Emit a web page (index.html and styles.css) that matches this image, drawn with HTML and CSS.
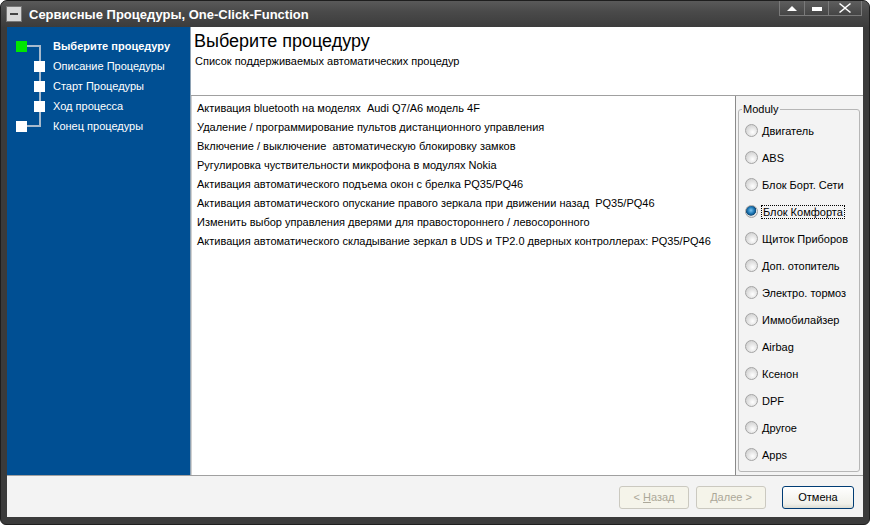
FILE: index.html
```html
<!DOCTYPE html>
<html lang="ru">
<head>
  <meta charset="UTF-8" />
  <title>Сервисные Процедуры, One-Click-Function</title>
  <link rel="stylesheet" href="styles.css">
</head>
<body>

<div class="window">
  <div class="titlebar">
    <span class="sys-icon"><span></span></span>
    <span class="title">Сервисные Процедуры, One-Click-Function</span>
    <div class="controls">
      <span class="ctl ctl-up"><svg width="10" height="6" viewBox="0 0 10 6"><path d="M0 6 L5 1 L10 6 Z" fill="#fff"/></svg></span>
      <span class="ctl ctl-min"><span class="bar"></span></span>
      <span class="ctl ctl-close"><svg width="12" height="10" viewBox="0 0 12 10"><path d="M1 0 L6 4 L11 0 L12 1 L7 5 L12 9 L11 10 L6 6 L1 10 L0 9 L5 5 L0 1 Z" fill="#fff"/></svg></span>
    </div>
  </div>

  <div class="client">
    <div class="main">
      <div class="steps">
        <svg class="tree" width="50" height="110" viewBox="0 0 50 110">
          <path d="M18 19 H33 V99 H18" fill="none" stroke="#a7bacd" stroke-width="2"/>
        </svg>
        <div class="step current"><span class="box green"></span>Выберите процедуру</div>
        <div class="step sub"><span class="box"></span>Описание Процедуры</div>
        <div class="step sub"><span class="box"></span>Старт Процедуры</div>
        <div class="step sub"><span class="box"></span>Ход процесса</div>
        <div class="step"><span class="box"></span>Конец процедуры</div>
      </div>

      <div class="content">
        <div class="header">
          <h1>Выберите процедуру</h1>
          <p>Список поддерживаемых автоматических процедур</p>
        </div>
        <div class="body">
          <ul class="list">
            <li>Активация bluetooth на моделях&nbsp; Audi Q7/A6 модель 4F</li>
            <li>Удаление / программирование пультов дистанционного управления</li>
            <li>Включение / выключение&nbsp; автоматическую блокировку замков</li>
            <li>Ругулировка чуствительности микрофона в модулях Nokia</li>
            <li>Активация автоматического подъема окон с брелка PQ35/PQ46</li>
            <li>Активация автоматического опускание правого зеркала при движении назад&nbsp; PQ35/PQ46</li>
            <li>Изменить выбор управления дверями для правостороннего / левосоронного</li>
            <li>Активация автоматического складывание зеркал в UDS и TP2.0 дверных контроллерах: PQ35/PQ46</li>
          </ul>
          <div class="side">
            <div class="group">
              <span class="legend">Moduly</span>
              <div class="radio"><span class="dot"></span>Двигатель</div>
              <div class="radio"><span class="dot"></span>ABS</div>
              <div class="radio"><span class="dot"></span>Блок Борт. Сети</div>
              <div class="radio checked"><span class="dot"></span><span class="focus">Блок Комфорта</span></div>
              <div class="radio"><span class="dot"></span>Щиток Приборов</div>
              <div class="radio"><span class="dot"></span>Доп. отопитель</div>
              <div class="radio"><span class="dot"></span>Электро. тормоз</div>
              <div class="radio"><span class="dot"></span>Иммобилайзер</div>
              <div class="radio"><span class="dot"></span>Airbag</div>
              <div class="radio"><span class="dot"></span>Ксенон</div>
              <div class="radio"><span class="dot"></span>DPF</div>
              <div class="radio"><span class="dot"></span>Другое</div>
              <div class="radio"><span class="dot"></span>Apps</div>
            </div>
          </div>
        </div>
      </div>
    </div>

    <div class="footer">
      <button class="btn" disabled>&lt; <u>Н</u>азад</button>
      <button class="btn" disabled><u>Д</u>алее &gt;</button>
      <button class="btn btn-default">Отмена</button>
    </div>
  </div>
</div>

</body>
</html>
```

FILE: styles.css
```css
body {
  margin: 0;
  background: #fff;
  font-family: 'Liberation Sans', Arial, sans-serif;
  font-size: 11px;
}
.window {
  width: 870px;
  height: 525px;
  background: #3b3b3b;
  border-radius: 7px 7px 6px 6px;
  display: flex;
  flex-direction: column;
  box-sizing: border-box;
  border: 1px solid #1e1e1e;
}
.titlebar {
  height: 26px;
  display: flex;
  align-items: center;
  background: linear-gradient(to bottom, #5a5a5a 0%, #4a4a4a 40%, #3c3c3c 100%);
  border-radius: 6px 6px 0 0;
  position: relative;
}
.sys-icon {
  width: 14px;
  height: 14px;
  margin-left: 5px;
  background: #d8d8d8;
  border: 1px solid #777;
  display: flex;
  align-items: center;
  justify-content: center;
}
.sys-icon span {
  width: 8px;
  height: 2px;
  background: #444;
}
.title {
  margin-left: 7px;
  color: #fff;
  font-weight: bold;
  font-size: 13px;
}
.controls {
  position: absolute;
  top: 0;
  right: 7px;
  display: flex;
}
.ctl {
  height: 14px;
  border: 1px solid #7a7a7a;
  border-top: none;
  background: linear-gradient(to bottom, #5e5e5e, #454545);
  display: flex;
  align-items: center;
  justify-content: center;
}
.ctl-up { width: 24px; }
.ctl-min { width: 23px; border-left: none; }
.ctl-close { width: 32px; border-left: none; }
.ctl-min .bar {
  width: 10px;
  height: 4px;
  background: #fff;
  margin-top: 2px;
}
.client {
  margin: 0 6px;
  height: 490px;
  display: flex;
  flex-direction: column;
  background: #f3f3f3;
}
.main {
  height: 448px;
  display: flex;
  border-bottom: 1px solid #a0a0a0;
}
.steps {
  width: 184px;
  background: #004f93;
  border-right: 1px solid #8ea2b4;
  padding-top: 9px;
  position: relative;
  box-sizing: border-box;
}
.tree {
  position: absolute;
  left: 0;
  top: 0;
}
.step {
  height: 20px;
  display: flex;
  align-items: center;
  color: #fff;
  position: relative;
}
.step .box {
  width: 11px;
  height: 11px;
  background: #fff;
  margin-left: 9px;
  margin-right: 26px;
}
.step.sub .box {
  margin-left: 27px;
  margin-right: 8px;
}
.step .box.green {
  background: #00e600;
}
.step.current {
  font-weight: bold;
}
.content {
  flex: 1;
  display: flex;
  flex-direction: column;
  background: #fff;
}
.header {
  height: 69px;
  border-bottom: 1px solid #a0a0a0;
  padding: 4px 0 0 3px;
  box-sizing: border-box;
}
.header h1 {
  margin: 0;
  font-size: 18px;
  font-weight: normal;
  line-height: 20px;
}
.header p {
  margin: 4px 0 0 1px;
}
.body {
  flex: 1;
  display: flex;
}
.list {
  width: 543px;
  margin: 0;
  padding: 3px 0 0 0;
  list-style: none;
  border-right: 1px solid #8a8a8a;
  border-left: 1px solid #d0d0d0;
}
.list li {
  height: 19px;
  line-height: 19px;
  padding-left: 5px;
  white-space: nowrap;
}
.side {
  flex: 1;
  background: #f3f3f3;
  padding: 13px 3px 3px 2px;
}
.group {
  height: 100%;
  box-sizing: border-box;
  border: 1px solid #b6b6b6;
  border-radius: 3px;
  padding-top: 7px;
  position: relative;
}
.legend {
  position: absolute;
  top: -7px;
  left: 3px;
  background: #f3f3f3;
  padding: 0 2px 0 1px;
}
.radio {
  height: 27px;
  display: flex;
  align-items: center;
  padding-left: 6px;
}
.dot {
  width: 11px;
  height: 11px;
  border-radius: 50%;
  border: 1px solid #a4a4a4;
  background: radial-gradient(circle at 60% 65%, #ffffff 0%, #e4e4e4 45%, #c6c6c6 100%);
  margin-right: 4px;
  flex-shrink: 0;
}
.radio.checked .dot {
  background: radial-gradient(circle at 45% 40%, #7ec4ef 0%, #1f7ab8 35%, #104b7a 55%, #e6e6e6 62%, #d0d0d0 100%);
}
.focus {
  outline: 1px dotted #000;
  padding: 0 1px;
}
.footer {
  flex: 1;
  display: flex;
  justify-content: flex-end;
  align-items: center;
  padding-right: 9px;
  padding-top: 1px;
  gap: 7px;
}
.btn {
  width: 70px;
  height: 23px;
  font-family: 'Liberation Sans', Arial, sans-serif;
  font-size: 11px;
  border: 1px solid #003c74;
  border-radius: 3px;
  background: linear-gradient(to bottom, #ffffff, #f0f0ea 80%, #dcdcd2);
  color: #000;
  padding: 0;
}
.btn:disabled {
  border-color: #cbc9c0;
  background: #f5f4ea;
  color: #aca899;
}
.btn-default {
  margin-left: 9px;
  width: 72px;
}
```
